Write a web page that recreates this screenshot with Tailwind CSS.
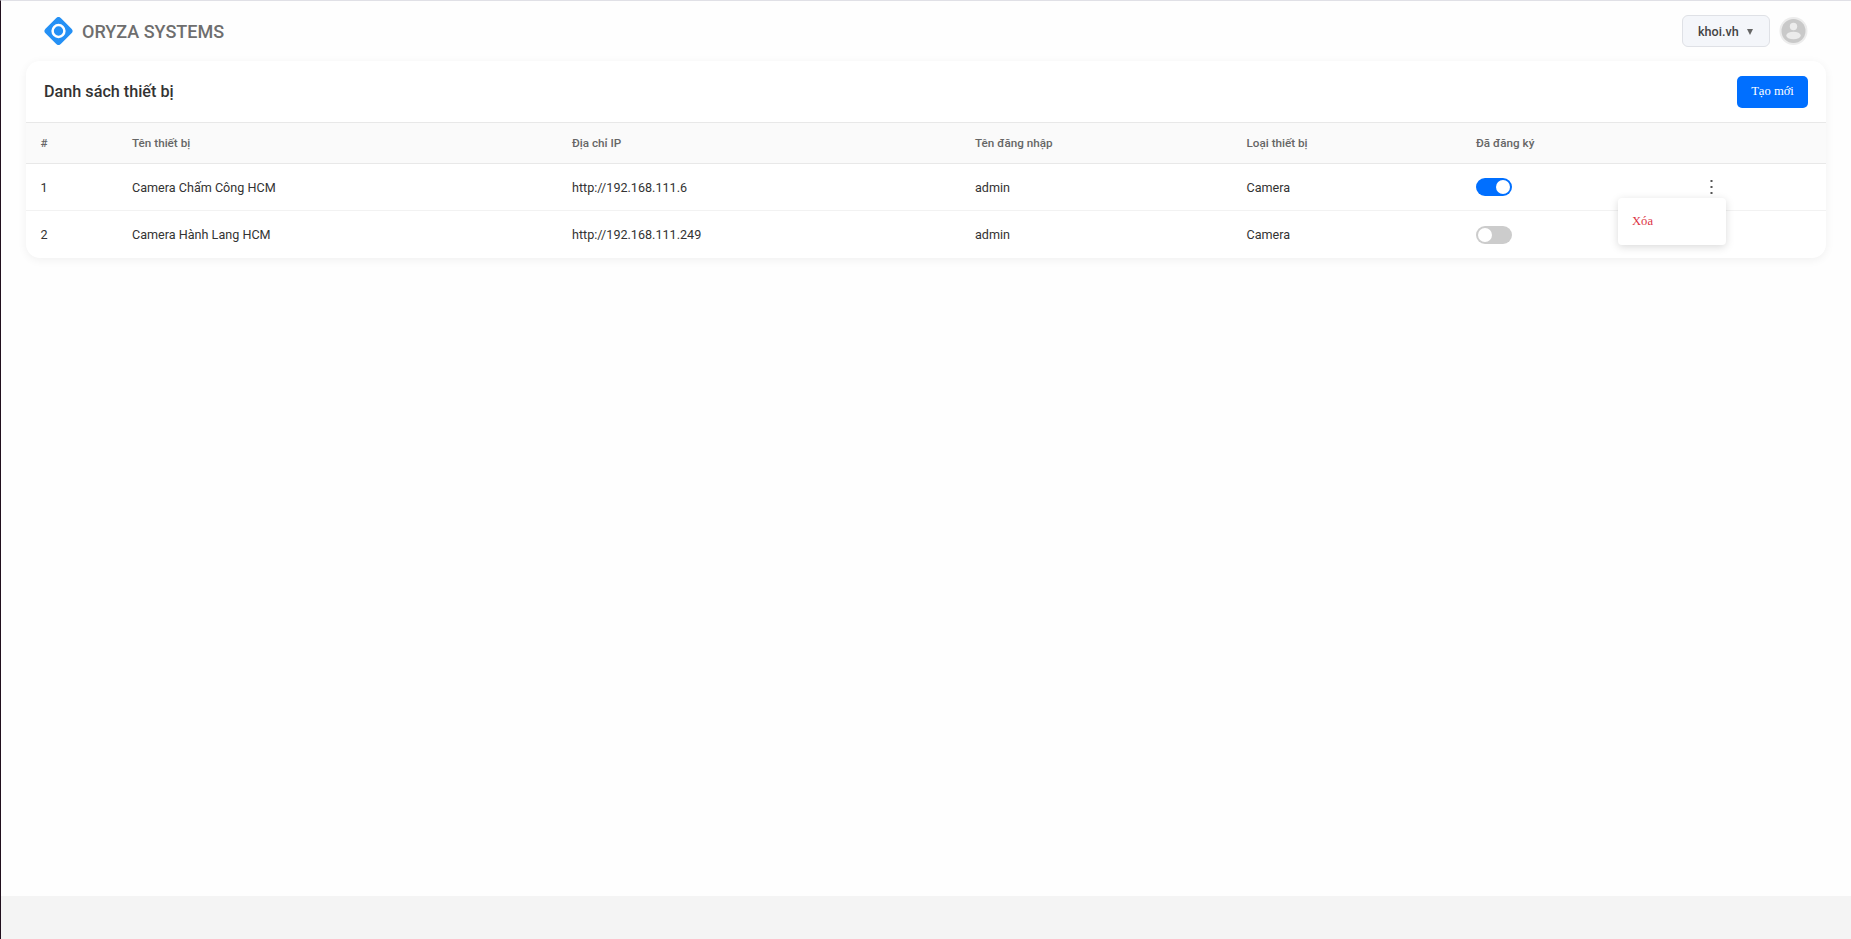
<!DOCTYPE html>
<html lang="vi">

<head>
  <meta charset="UTF-8" />
  <meta name="viewport" content="width=device-width, initial-scale=1.0" />
  <title>Oryza Systems</title>
  <script src="https://cdn.jsdelivr.net/npm/@tailwindcss/browser@4"></script>
</head>

<body class="h-screen flex flex-col overflow-hidden bg-[#fefefe] border-l border-t border-l-[#21101e] border-t-[#e0e0e6] font-[Roboto,sans-serif] text-[#333]">
  <header class="h-15 shrink-0 flex items-center justify-between px-[43px]">
    <div class="flex items-center gap-[9px]">
      <svg class="w-[29px] h-[28px]" viewBox="0 0 29 28">
        <rect x="3.7" y="3.2" width="21.6" height="21.6" rx="3.2" fill="#2490f5" transform="rotate(45 14.5 14)" />
        <circle cx="14.5" cy="14" r="5.9" fill="none" stroke="#fff" stroke-width="2.5" />
      </svg>
      <span class="text-[18px] font-medium text-[#6e6e6e]">ORYZA SYSTEMS</span>
    </div>
    <div class="flex items-center gap-[9px]">
      <button class="w-22 h-8 flex items-center justify-between pt-[2px] pl-[15px] pr-[16px] rounded-md border border-[#dfe1e6] bg-[#f4f6fa] text-[12.6px] font-medium text-[#444]">
        khoi.vh
        <svg class="w-[6px] h-[6px] mb-px" viewBox="0 0 6 6" fill="#666">
          <path d="M0 0h6L3 6z" />
        </svg>
      </button>
      <svg class="w-[29px] h-[28px]" viewBox="0 0 29 28">
        <circle cx="14.5" cy="14" r="14" fill="#ececec" />
        <circle cx="14.5" cy="14" r="12" fill="#c9c9c9" />
        <circle cx="14.5" cy="9.5" r="3.7" fill="#ececec" />
        <ellipse cx="14.5" cy="18.5" rx="7.2" ry="3.8" fill="#ececec" />
      </svg>
    </div>
  </header>

  <main class="flex-1 px-[25px]">
    <section class="h-[197px] rounded-[14px] bg-white shadow-[0_2px_10px_rgba(0,0,0,0.06)]">
      <div class="h-[61px] flex items-center justify-between px-[18px]">
        <h1 class="pt-[2px] text-[16.2px] font-medium">Danh sách thiết bị</h1>
        <button class="w-[71px] h-8 rounded-[5px] bg-[#006fff] font-['Liberation_Serif',serif] text-[12.6px] text-white">Tạo mới</button>
      </div>

      <table class="w-full table-fixed border-separate border-spacing-0 text-left text-[12.6px]">
        <colgroup>
          <col class="w-[91px]" />
          <col class="w-[440px]" />
          <col class="w-[403px]" />
          <col class="w-[271px]" />
          <col class="w-[230px]" />
          <col class="w-[136px]" />
          <col />
        </colgroup>
        <thead>
          <tr class="h-[42px] bg-[#fafafa] text-[11.7px] text-[#666] *:border-y *:border-[#e8e8e8] *:px-[15px] *:first:pl-[14.5px] *:pt-px *:font-medium">
            <th>#</th>
            <th>Tên thiết bị</th>
            <th>Địa chỉ IP</th>
            <th>Tên đăng nhập</th>
            <th class="pl-[15.5px]!">Loại thiết bị</th>
            <th>Đã đăng ký</th>
            <th></th>
          </tr>
        </thead>
        <tbody>
          <tr class="h-[47px] *:border-b *:border-[#f2f2f2] *:px-[15px] *:first:pl-[14.5px]">
            <td class="pt-[2px]">1</td>
            <td class="pt-[2px]">Camera Chấm Công HCM</td>
            <td class="pt-[2px]">http://192.168.111.6</td>
            <td class="pt-[2px]">admin</td>
            <td class="pt-[2px] pl-[15.5px]!">Camera</td>
            <td>
              <div class="w-9 h-[18px] flex items-center justify-end rounded-full bg-[#006fff] px-[2px]">
                <div class="size-[14px] rounded-full bg-white"></div>
              </div>
            </td>
            <td>
              <div class="relative flex justify-center">
                <svg class="w-[3px] h-[14px]" viewBox="0 0 3 14" fill="#555">
                  <rect x="0.5" y="0" width="2" height="2" />
                  <rect x="0.5" y="6" width="2" height="2" />
                  <rect x="0.5" y="12" width="2" height="2" />
                </svg>
                <!-- row menu -->
                <div class="absolute top-[18px] left-[6px] z-10 w-[108px] h-[47px] flex items-center rounded bg-white pl-[14px] shadow-[0_2px_8px_rgba(0,0,0,0.15)] font-['Liberation_Serif',serif] text-[12.6px] text-[#dc3545]">Xóa</div>
              </div>
            </td>
          </tr>
          <tr class="h-[47px] *:px-[15px] *:first:pl-[14.5px]">
            <td class="pt-px">2</td>
            <td class="pt-px">Camera Hành Lang HCM</td>
            <td class="pt-px">http://192.168.111.249</td>
            <td class="pt-px">admin</td>
            <td class="pt-px pl-[15.5px]!">Camera</td>
            <td>
              <div class="w-9 h-[18px] flex items-center rounded-full bg-[#ccc] px-[2px]">
                <div class="size-[14px] rounded-full bg-white"></div>
              </div>
            </td>
            <td></td>
          </tr>
        </tbody>
      </table>
    </section>
  </main>

  <footer class="h-[43px] shrink-0 bg-[#f4f4f4]"></footer>
</body>

</html>
